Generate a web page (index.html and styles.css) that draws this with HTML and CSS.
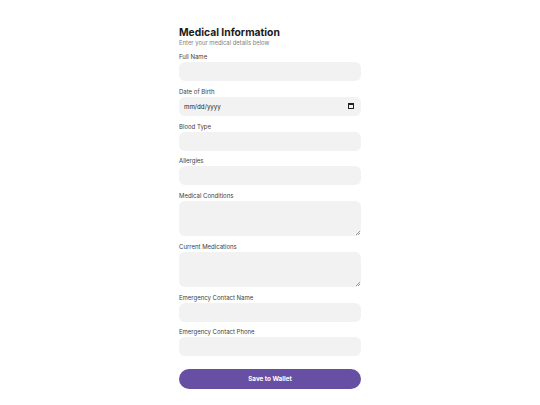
FILE: index.html
```html
<!DOCTYPE html>
<html lang="en">
<head>
<meta charset="utf-8">
<title>Medical Information</title>
<link rel="stylesheet" href="styles.css">
</head>
<body>
<main class="card">
  <h1 class="title">Medical Information</h1>
  <p class="subtitle">Enter your medical details below</p>
  <form class="form">
    <div class="field">
      <label class="label">Full Name</label>
      <div class="input"></div>
    </div>
    <div class="field">
      <label class="label">Date of Birth</label>
      <div class="input date">
        <span class="date-text">mm/dd/yyyy</span>
        <svg class="cal" width="6" height="6" viewBox="0 0 6 6"><rect x="0.5" y="0.5" width="5" height="5" fill="none" stroke="#222" stroke-width="1"/><rect x="0.5" y="0.5" width="5" height="1.5" fill="#222"/></svg>
      </div>
    </div>
    <div class="field">
      <label class="label">Blood Type</label>
      <div class="input"></div>
    </div>
    <div class="field">
      <label class="label">Allergies</label>
      <div class="input"></div>
    </div>
    <div class="field">
      <label class="label">Medical Conditions</label>
      <div class="input area"><span class="grip"></span></div>
    </div>
    <div class="field">
      <label class="label">Current Medications</label>
      <div class="input area"><span class="grip"></span></div>
    </div>
    <div class="field">
      <label class="label">Emergency Contact Name</label>
      <div class="input"></div>
    </div>
    <div class="field">
      <label class="label">Emergency Contact Phone</label>
      <div class="input"></div>
    </div>
    <button type="button" class="save">Save to Wallet</button>
  </form>
</main>
</body>
</html>
```
FILE: styles.css
```css
html, body {
  margin: 0;
  padding: 0;
  background: #ffffff;
}
body {
  font-family: Inter, "Noto Sans", sans-serif;
  color: #1f1f1f;
}
.card {
  width: 182px;
  margin: 0 auto;
  padding-top: 26px;
}
.title {
  margin: 0;
  font-size: 10.3px;
  line-height: 12px;
  font-weight: 700;
  color: #1a1a1a;
}
.subtitle {
  margin: 1px 0 5px 0;
  font-size: 5.9px;
  line-height: 8px;
  color: #808080;
}
.form {
  display: flex;
  flex-direction: column;
}
.field {
  display: flex;
  flex-direction: column;
  margin-bottom: 5.75px;
}
.label {
  font-size: 6px;
  line-height: 10px;
  color: #404040;
}
.input {
  position: relative;
  height: 19px;
  border-radius: 6px;
  background: #f2f2f2;
}
.input.area {
  height: 35px;
}
.date {
  display: flex;
  align-items: center;
  justify-content: space-between;
  padding: 0 7px 0 5px;
}
.date-text {
  font-size: 6.2px;
  color: #222;
}
.grip {
  position: absolute;
  right: 1px;
  bottom: 1px;
  width: 4px;
  height: 4px;
  background: linear-gradient(135deg, transparent 45%, #999 45%, #999 55%, transparent 55%, transparent 70%, #999 70%, #999 80%, transparent 80%);
}
.save {
  margin-top: 7px;
  height: 20px;
  border: none;
  border-radius: 10px;
  background: #6750a4;
  color: #ffffff;
  font-family: Inter, "Noto Sans", sans-serif;
  font-size: 6.3px;
  font-weight: 700;
  padding: 0;
}
```
